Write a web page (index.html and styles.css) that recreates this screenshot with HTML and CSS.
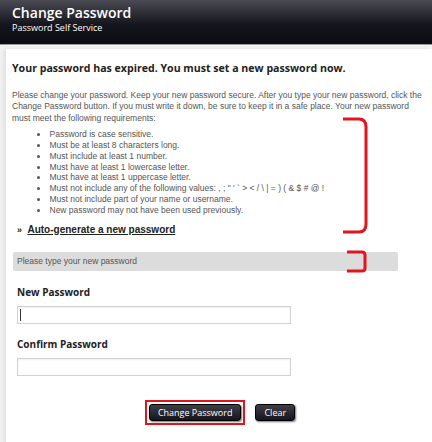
FILE: index.html
```html
<!DOCTYPE html>
<html>
<head>
	<title>Change Password</title>
	<link rel="stylesheet" href="styles.css">
</head>
<body>
	<!-- header -->
	<div class="top">
		<h1 class="title">Change Password</h1>
		<p class="subtitle">Password Self Service</p>
	</div>

	<!-- main panel -->
	<div class="panel">
		<h2 class="expired">Your password has expired. You must set a new password now.</h2>

		<div class="rules">
			<p class="intro">Please change your password. Keep your new password secure. After you type your new password, click the Change Password button. If you must write it down, be sure to keep it in a safe place. Your new password must meet the following requirements:</p>
			<ul class="reqs">
				<li>Password is case sensitive.</li>
				<li>Must be at least 8 characters long.</li>
				<li>Must include at least 1 number.</li>
				<li>Must have at least 1 lowercase letter.</li>
				<li>Must have at least 1 uppercase letter.</li>
				<li>Must not include any of the following values: , ; " ' ` &gt; &lt; / \ | = ) ( &amp; $ # @ !</li>
				<li>Must not include part of your name or username.</li>
				<li>New password may not have been used previously.</li>
			</ul>
			<p class="auto"><span class="raquo">&raquo;</span> <a href="#">Auto-generate a new password</a></p>
			<svg class="mark big" width="30" height="118" viewBox="0 0 30 118">
				<path d="M2 2 H18 Q25 2 25 10 V107 Q25 115 18 115 H2" fill="none" stroke="#e3141d" stroke-width="3"/>
			</svg>
		</div>

		<div class="hint">
			Please type your new password
			<svg class="mark small" width="24" height="24" viewBox="0 0 24 24">
				<path d="M1 2 H16 Q19 2 19 5 V18 Q19 21 16 21 H1" fill="none" stroke="#e3141d" stroke-width="3"/>
			</svg>
		</div>

		<div class="field">
			<label class="lbl">New Password</label>
			<div class="box"><span class="caret"></span></div>
		</div>
		<div class="field second">
			<label class="lbl">Confirm Password</label>
			<div class="box"></div>
		</div>

		<div class="actions">
			<span class="ring"><button type="button" class="btn">Change Password</button></span>
			<button type="button" class="btn">Clear</button>
		</div>
	</div>
</body>
</html>
```

FILE: styles.css
```css
*{
	margin:0;
	padding:0;
	list-style:none;
}
body{
	background:#f3f3f3;
	font-family:"Liberation Sans", Arial, sans-serif;
	color:#555;
	overflow:hidden;
}

.top{
	height:44px;
	background:linear-gradient(#4a4a53, #16161e 55%, #0b0b12);
	border-bottom:1px solid #9a9a9a;
	padding-left:12px;
	color:#fff;
	font-family:"Open Sans", sans-serif;
}
.title{
	font-size:14px;
	font-weight:600;
	line-height:16px;
	padding-top:5px;
}
.subtitle{
	font-size:9px;
	line-height:11px;
	margin-top:1px;
}

.panel{
	position:relative;
	margin:4px 0 0 6px;
	height:383px;
	background:#fff;
	box-shadow:-3px 0 4px #e2e2e2;
	padding:12px 0 0 6px;
}
.expired{
	font-family:"Open Sans", sans-serif;
	font-size:10.6px;
	font-weight:700;
	color:#222;
	line-height:14px;
}

.rules{
	position:relative;
	margin-top:15px;
}
.intro{
	font-size:8.5px;
	line-height:11.4px;
	padding-right:8px;
}
.reqs{
	margin-top:5px;
	padding-left:25px;
	font-size:8.5px;
	line-height:10.8px;
}
.reqs li{
	list-style:disc inside;
}
.auto{
	margin:8px 0 0 5px;
	font-size:10px;
	font-weight:700;
	color:#222;
}
.raquo{
	font-size:9px;
	margin-right:3px;
}
.auto a{
	color:#222;
}

.mark{
	position:absolute;
}
.big{
	left:329px;
	top:27px;
}
.small{
	left:333px;
	top:-2px;
}

.hint{
	position:relative;
	margin:17px 34px 0 1px;
	height:19px;
	line-height:19px;
	background:#dcdcdc;
	border-radius:2px;
	padding-left:4px;
	font-size:8.5px;
}

.field{
	padding-left:5px;
	margin-top:15px;
}
.second{
	margin-top:14px;
}
.lbl{
	display:block;
	font-family:"Open Sans", sans-serif;
	font-size:10px;
	font-weight:700;
	color:#222;
	line-height:12px;
}
.box{
	margin-top:8px;
	width:272px;
	height:16px;
	border:1px solid #d2d2d2;
	box-shadow:inset 0 1px 2px #eee;
	position:relative;
}
.caret{
	position:absolute;
	left:2px;
	top:2px;
	width:1px;
	height:12px;
	background:#333;
}

.actions{
	display:flex;
	justify-content:center;
	align-items:center;
	gap:10px;
	margin:24px 0 0 -4px;
}
.ring{
	border:2px solid #e3141d;
	padding:2px;
	display:flex;
}
.btn{
	background:linear-gradient(#3e3e48, #15151d);
	border:1px solid #000;
	border-radius:3px;
	box-shadow:1px 1px 2px #777;
	color:#fff;
	font-family:"Open Sans", sans-serif;
	font-size:9px;
	height:17px;
	padding:0 8px;
}
```
